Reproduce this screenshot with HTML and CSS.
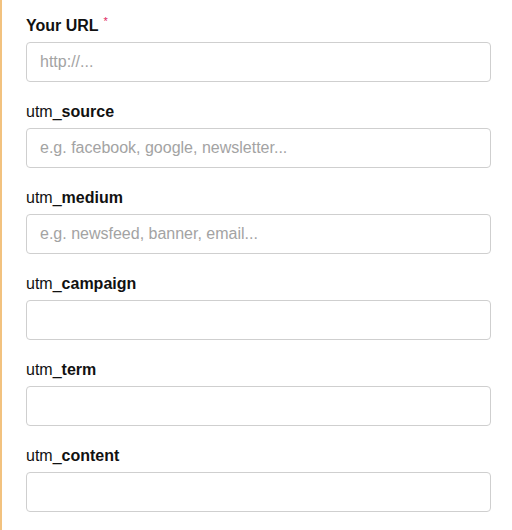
FILE: index.html
```html
<!DOCTYPE html>
<html>
<head>
<meta charset="utf-8">
<link rel="stylesheet" href="styles.css">
</head>
<body>
<div class="panel">
  <div class="field">
    <label class="label"><b>Your URL</b><span class="req">*</span></label>
    <input class="input" type="text" placeholder="http://...">
  </div>
  <div class="field">
    <label class="label">utm_<b>source</b></label>
    <input class="input" type="text" placeholder="e.g. facebook, google, newsletter...">
  </div>
  <div class="field">
    <label class="label">utm_<b>medium</b></label>
    <input class="input" type="text" placeholder="e.g. newsfeed, banner, email...">
  </div>
  <div class="field">
    <label class="label">utm_<b>campaign</b></label>
    <input class="input" type="text">
  </div>
  <div class="field">
    <label class="label">utm_<b>term</b></label>
    <input class="input" type="text">
  </div>
  <div class="field">
    <label class="label">utm_<b>content</b></label>
    <input class="input" type="text">
  </div>
</div>
</body>
</html>
```
FILE: styles.css
```css
html, body {
  margin: 0;
  padding: 0;
  background: #fff;
}
body {
  font-family: "Liberation Sans", Arial, sans-serif;
  color: #111;
}
.panel {
  border-left: 2px solid #f2c27f;
  padding: 15px 21px 0 24px;
  height: 530px;
  box-sizing: border-box;
}
.field {
  display: flex;
  flex-direction: column;
  margin-bottom: 19px;
}
.label {
  display: block;
  font-size: 16px;
  line-height: 20px;
  height: 20px;
  padding-top: 1px;
  margin-bottom: 6px;
  color: #111;
}
.label b {
  font-weight: bold;
}
.req {
  color: #e0245e;
  font-size: 11px;
  line-height: 0;
  vertical-align: 6px;
  margin-left: 5px;
}
.input {
  box-sizing: border-box;
  height: 40px;
  width: 100%;
  border: 1px solid #cfcfcf;
  border-radius: 4px;
  padding: 0 13px;
  font-family: "Liberation Sans", Arial, sans-serif;
  font-size: 16px;
  color: #333;
  background: #fff;
  outline: none;
}
.input::placeholder {
  color: #a3a3a3;
}
```
